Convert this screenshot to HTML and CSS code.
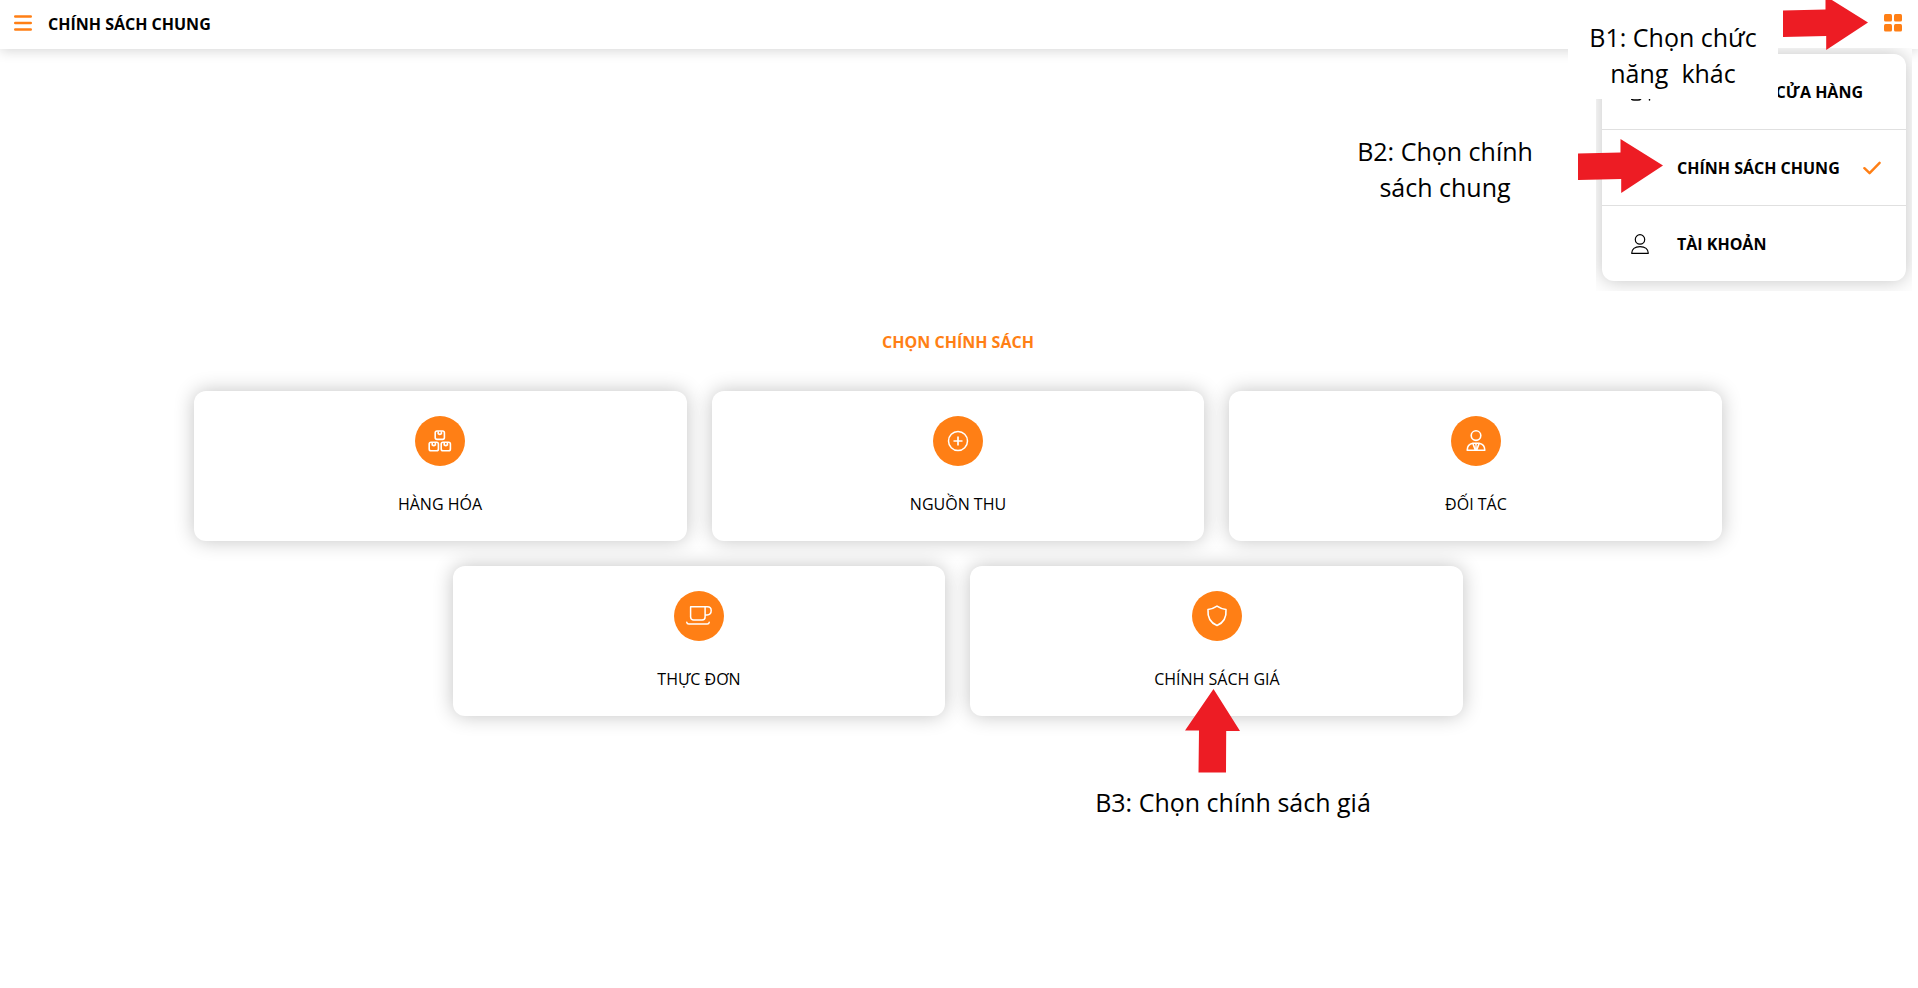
FILE: index.html
```html
<!DOCTYPE html>
<html lang="vi">
<head>
<meta charset="utf-8">
<meta name="viewport" content="width=device-width, initial-scale=1">
<title>Chính sách chung</title>
<link rel="stylesheet" href="styles.css">
</head>
<body>
<header class="topbar">
  <button class="icon-button" type="button" aria-label="Menu">
    <svg width="18" height="16" viewBox="0 0 18 16" fill="none" stroke="currentColor" stroke-width="2.4" stroke-linecap="round"><path d="M1.2 1.5h15.6M1.2 8h15.6M1.2 14.500h15.6"/></svg>
  </button>
  <h1 class="topbar-title">CHÍNH SÁCH CHUNG</h1>
  <button class="icon-button" type="button" aria-label="Chức năng">
    <svg width="18" height="18" viewBox="0 0 18 18" fill="currentColor"><rect width="8" height="7.5" rx="1.5"/><rect x="10" width="8" height="7.5" rx="1.5"/><rect y="10" width="8" height="7.5" rx="1.5"/><rect x="10" y="10" width="8" height="7.5" rx="1.5"/></svg>
  </button>
</header>

<nav class="switcher" aria-label="Chức năng khác">
  <div class="switcher-menu">
    <button class="switcher-item" type="button">
      <span class="switcher-icon"><svg width="22" height="20" viewBox="0 0 22 20" fill="none" stroke="currentColor" stroke-width="1.5" stroke-linecap="round"><path d="M0 16.500Q1 18 3 18h4q2 0 3-1.500M18.500 17.500v.4"/></svg></span>
      <span class="switcher-label switcher-label-end">CỬA HÀNG</span>
    </button>
    <button class="switcher-item" type="button" aria-current="true">
      <span class="switcher-icon"></span>
      <span class="switcher-label">CHÍNH SÁCH CHUNG</span>
      <svg class="switcher-check" width="18" height="14" viewBox="0 0 18 14" fill="none" stroke="currentColor" stroke-width="2.4" stroke-linecap="round" stroke-linejoin="round"><path d="M1.4 7.2l5.2 5L16.6 1.800"/></svg>
    </button>
    <button class="switcher-item" type="button">
      <span class="switcher-icon"><svg width="18" height="20" viewBox="0 0 18 20" fill="none" stroke="currentColor" stroke-width="1.2" stroke-linejoin="round"><circle cx="9" cy="5.4" r="4.7"/><path d="M.7 19.3C.7 15 3.8 12.7 9 12.7s8.3 2.3 8.3 6.6z"/></svg></span>
      <span class="switcher-label">TÀI KHOẢN</span>
    </button>
  </div>
</nav>

<main class="content">
  <h2 class="content-title">CHỌN CHÍNH SÁCH</h2>
  <div class="cards">
    <button class="card" type="button">
      <span class="card-icon"><svg width="24" height="24" viewBox="0 0 24 24" fill="none" stroke="currentColor" stroke-width="1.600"><g id="box"><rect x="7.2" y="2" width="9.2" height="8.400" rx="1.8"/><path d="M10.200 2.2v2.4q1.6 1.5 3.2 0V2.2"/></g><use href="#box" x="-6" y="11.3"/><use href="#box" x="6" y="11.3"/></svg></span>
      <span class="card-label">HÀNG HÓA</span>
    </button>
    <button class="card" type="button">
      <span class="card-icon"><svg width="24" height="24" viewBox="0 0 24 24" fill="none" stroke="currentColor" stroke-width="1.5"><circle cx="12" cy="12" r="9.5"/><path d="M12 7.5v9M7.5 12h9" stroke-width="1.7"/></svg></span>
      <span class="card-label">NGUỒN THU</span>
    </button>
    <button class="card" type="button">
      <span class="card-icon"><svg width="24" height="24" viewBox="0 0 24 24" fill="none" stroke="currentColor" stroke-width="1.600" stroke-linejoin="round"><circle cx="12" cy="6.600" r="4.8"/><path d="M8.8 14.2C5.3 14.900 3.200 17.100 3.200 21.2h17.6c0-4.1-2.1-6.300-5.6-7zM8.8 14.2l2.6 7M15.2 14.2l-2.6 7"/><path d="M11 14.2h2l-.4 2.3.4 4.700h-2l.4-4.700z" fill="currentColor" stroke="none"/></svg></span>
      <span class="card-label">ĐỐI TÁC</span>
    </button>
    <button class="card" type="button">
      <span class="card-icon"><svg width="26" height="24" viewBox="0 0 26 24" fill="none" stroke="currentColor" stroke-width="1.5" stroke-linecap="round" stroke-linejoin="round"><path d="M4.6 2.8h14.500v10.3a3 3 0 0 1-3 3H7.6a3 3 0 0 1-3-3zM19.1 2.8h2.4q3.7 0 3.7 3.800 0 4.3-4.2 4.4h-1.9M.8 18.300q.2 1.700 2 1.700h18.400q1.8 0 2-1.700"/></svg></span>
      <span class="card-label">THỰC ĐƠN</span>
    </button>
    <div class="card-slot">
      <button class="card" type="button">
        <span class="card-icon"><svg width="24" height="24" viewBox="0 0 24 24" fill="none" stroke="currentColor" stroke-width="1.600" stroke-linejoin="round"><path d="M12 2.100c2.600 1.800 5.500 2.800 9 3.400.6 7.700-2.400 13.300-9 16-6.600-2.700-9.600-8.300-9-16 3.500-.6 6.400-1.600 9-3.400z"/></svg></span>
        <span class="card-label">CHÍNH SÁCH GIÁ</span>
      </button>
      <div class="step step-three">
        <svg class="step-arrow" width="55" height="84" viewBox="0 0 55 84" fill="#ed1c24"><path d="M28.500 0L55 42H41.200L41 83.500H13.500L14 41.500H0z"/></svg>
        <p class="step-text">B3: Chọn chính sách giá</p>
      </div>
    </div>
  </div>
</main>

<div class="step step-one">
  <p class="step-text">B1: Chọn chức<br>năng&nbsp; khác</p>
</div>
<svg class="arrow arrow-one" width="85" height="54" viewBox="0 0 85 54" fill="#ed1c24"><path d="M0 14.500L42.500 13.500V0L85 26.500 43.200 54V40L0 41z"/></svg>
<div class="step step-two">
  <p class="step-text">B2: Chọn chính<br>sách chung</p>
</div>
<svg class="arrow arrow-two" width="85" height="54" viewBox="0 0 85 54" fill="#ed1c24"><path d="M0 14.500L42.500 13.500V0L85 26.500 43.200 54V40L0 41z"/></svg>
</body>
</html>
```
FILE: styles.css
```css
* {
  box-sizing: border-box;
}

body {
  margin: 0;
  min-height: 100vh;
  display: flex;
  flex-direction: column;
  position: relative;
  overflow-x: hidden;
  background: #fff;
  color: #000;
  font-family: "Open Sans", "Noto Sans", sans-serif;
  font-size: 16px;
  line-height: 24px;
}

button {
  border: 0;
  padding: 0;
  background: none;
  color: inherit;
  font: inherit;
  cursor: pointer;
}

svg {
  display: block;
}

h1,
h2,
p {
  margin: 0;
}

.topbar {
  display: flex;
  align-items: center;
  gap: 16px;
  height: 49px;
  padding: 0 16px 4px 14px;
  background: #fff;
  box-shadow: 0 2px 12px rgba(0, 0, 0, 0.16);
}

.icon-button {
  color: #ff7f15;
}

.topbar-title {
  flex: 1;
  padding-top: 3px;
  font-size: 16px;
  font-weight: 700;
}

.switcher {
  position: absolute;
  top: 48px;
  right: 6px;
  width: 316px;
  padding: 6px 6px 10px;
  overflow: hidden;
  background: #fff;
}

.switcher-menu {
  border-radius: 12px;
  background: #fff;
  box-shadow: 0 0 20px rgba(0, 0, 0, 0.24);
}

.switcher-item {
  display: flex;
  align-items: center;
  width: 100%;
  height: 75px;
  padding: 0 25px 0 29px;
  font-weight: 700;
  text-align: left;
}

.switcher-item + .switcher-item {
  height: 76px;
  border-top: 1px solid #e0e0e0;
}

.switcher-icon {
  width: 46px;
}

.switcher-label {
  flex: 1;
}

.switcher-label-end {
  padding-right: 18px;
  text-align: right;
}

.switcher-check {
  color: #ff7f15;
}

.content {
  flex: 1;
  display: flex;
  flex-direction: column;
  align-items: center;
  justify-content: center;
  padding: 8px 2px 0 0;
}

.content-title {
  margin-bottom: 37px;
  color: #ff7f15;
  font-size: 16px;
  font-weight: 700;
}

.cards {
  display: flex;
  flex-wrap: wrap;
  justify-content: center;
  gap: 25px;
  width: calc(81% - 23px);
}

.card,
.card-slot {
  width: calc((100% - 50px) / 3);
}

.card-slot {
  position: relative;
}

.card {
  display: flex;
  flex-direction: column;
  align-items: center;
  gap: 26px;
  min-height: 150px;
  padding: 25px;
  border-radius: 12px;
  background: #fff;
  box-shadow: 0 0 20px rgba(0, 0, 0, 0.24);
}

.card-slot .card {
  width: 100%;
}

.card-icon {
  display: grid;
  place-items: center;
  width: 50px;
  height: 50px;
  border-radius: 50%;
  background: #ff7f15;
  color: #fff;
}

.step {
  position: absolute;
  font-size: 25px;
  line-height: 36px;
  text-align: center;
  white-space: nowrap;
}

.step-one {
  top: 0;
  right: 140px;
  width: 210px;
  height: 99px;
  padding-top: 19px;
  background: #fff;
}

.step-two {
  top: 133px;
  right: 372px;
  width: 202px;
}

.step-three {
  top: 123px;
  left: 50%;
  display: flex;
  flex-direction: column;
  align-items: center;
  gap: 11px;
  width: 280px;
  margin-left: -124px;
}

.step-arrow {
  margin-right: 40px;
}

.arrow {
  position: absolute;
}

.arrow-one {
  top: -4px;
  right: 50px;
}

.arrow-two {
  top: 139px;
  right: 255px;
}
```
